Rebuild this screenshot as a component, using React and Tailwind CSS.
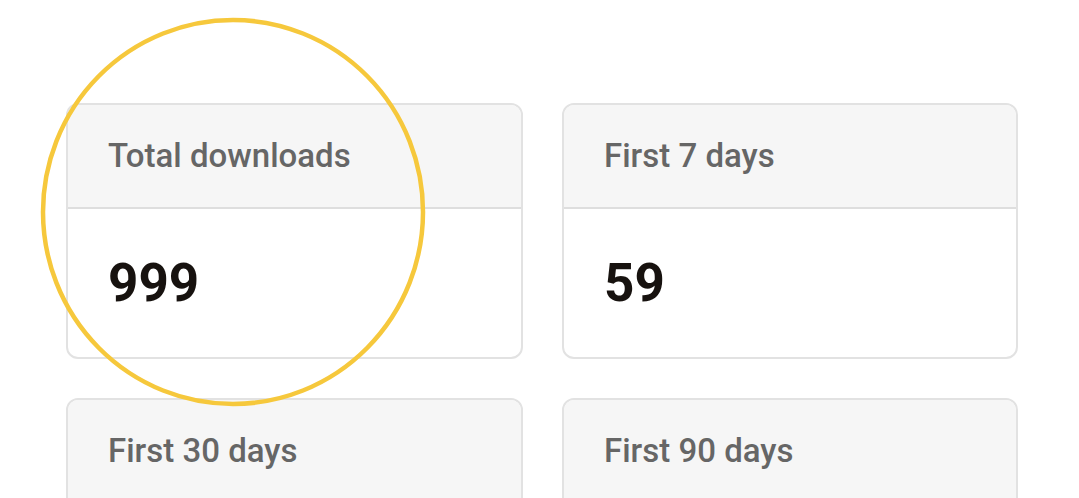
const stats = [
  { label: 'Total downloads', value: '999' },
  { label: 'First 7 days', value: '59' },
  { label: 'First 30 days' },
  { label: 'First 90 days' },
];

function StatCard({ label, value }) {
  return (
    <div className="rounded-[12px] border-2 border-[#e2e2e2] overflow-hidden bg-white">
      <div className="h-[104px] bg-[#f6f6f6] border-b-2 border-[#dedede] flex items-center pl-[40px]">
        <span className="text-[33px] font-medium text-[#666666]">{label}</span>
      </div>
      <div className="h-[148px] flex items-center pl-[40px]">
        {value && <span className="text-[53px] font-bold text-[#17120f] leading-none">{value}</span>}
      </div>
    </div>
  );
}

export default function App() {
  return (
    <div className="relative w-[1079px] h-[498px] overflow-hidden bg-white" style={{ fontFamily: 'Roboto, "Noto Sans", sans-serif' }}>
      <div className="grid grid-cols-[457px_456px] gap-x-[39px] gap-y-[39px] pl-[66px] pt-[103px]">
        {stats.map((s) => (
          <StatCard key={s.label} {...s} />
        ))}
      </div>

      {/* highlight ring */}
      <svg className="absolute left-0 top-0 pointer-events-none" width="1079" height="498">
        <ellipse cx="233" cy="212" rx="190" ry="192" fill="none" stroke="#f6c83c" strokeWidth="4.5" />
      </svg>
    </div>
  );
}
